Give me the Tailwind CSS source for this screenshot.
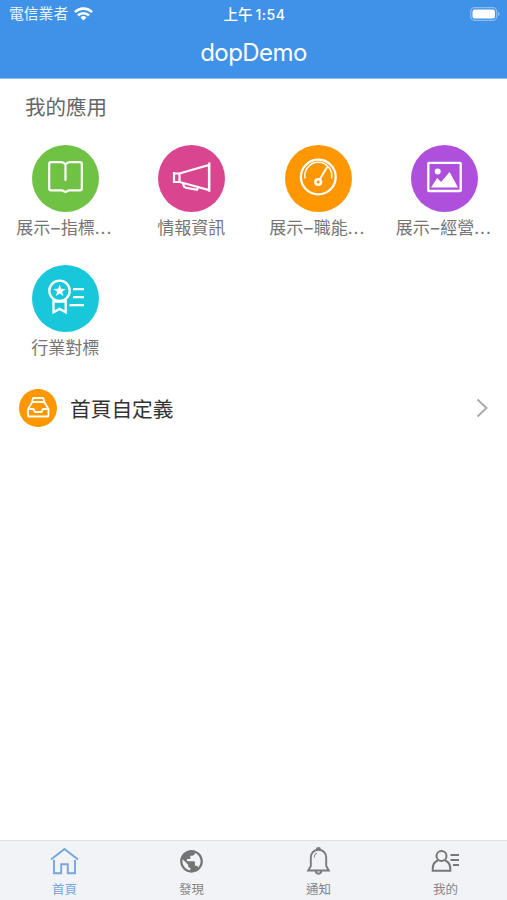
<!DOCTYPE html>
<html lang="zh-Hant">
<head>
<meta charset="utf-8">
<meta name="viewport" content="width=device-width, initial-scale=1">
<title>dopDemo</title>
<script src="https://cdn.jsdelivr.net/npm/@tailwindcss/browser@4"></script>
</head>
<body class="bg-white font-['Inter','Noto_Sans_CJK_TC',sans-serif]">
<div class="flex h-[900px] w-[507px] flex-col overflow-hidden">
  <header class="h-[79px] shrink-0 border-b border-[#8fc4f6] bg-[#3f92e8] text-white">
    <div class="grid h-[27px] grid-cols-[1fr_auto_1fr] items-center pr-[7px] pl-[9px] text-[14px] leading-[27px]">
      <div class="flex items-center gap-[6px] text-white/90">
        <span class="pt-px text-[14.8px] whitespace-nowrap">電信業者</span>
        <svg class="h-[15px] w-[19px] text-white" viewBox="0 0 19 15" fill="none" stroke="currentColor" stroke-width="2.600"><path d="M1 5.200a12 12 0 0 1 17 0M4 8.500a7.800 7.800 0 0 1 11 0"/><path d="M9.500 13.500l-3-3a4.300 4.300 0 0 1 6 0z" fill="currentColor" stroke="none"/></svg>
      </div>
      <div class="flex items-center gap-[3px] font-medium"><span class="text-[14.5px]">上午</span><span class="text-[14px] font-medium tracking-[0.5px]">1:54</span></div>
      <svg class="mb-px h-[14px] w-[30px] justify-self-end" viewBox="0 0 30 14"><rect x=".7" y=".7" width="26" height="12.600" rx="4" fill="none" stroke="#8abdf2" stroke-width="1.300"/><rect x="2.500" y="2.500" width="22.500" height="9" rx="2.200" fill="#fff"/><path d="M28.200 5v4q1.400-.7 1.400-2t-1.400-2z" fill="#9cc8f5"/></svg>
    </div>
    <h1 class="text-center text-[24px] leading-[51px] font-normal tracking-[-0.55px]">dopDemo</h1>
  </header>

  <main class="flex-1">
    <h2 class="pt-[13px] pl-[25px] text-[20.5px] leading-[32px] text-[#666]">我的應用</h2>
    <div class="mt-[21px] ml-[2px] grid w-[506px] grid-cols-4 gap-y-[27px]">
      <div class="flex h-[93px] flex-col items-center">
        <svg class="h-[67px] w-[67px] shrink-0" viewBox="0 0 67 67" fill="none" stroke="#fff" stroke-width="2.200" stroke-linejoin="round" stroke-linecap="round"><circle cx="33.500" cy="33.500" r="33.500" fill="#6fc244" stroke="none"/><path d="M33.500 35V19.500q-1.500-2.300-4.500-2.300H19q-1.800 0-1.800 1.800v24.500q0 1.800 1.800 1.800h10.500q1.500 0 2 .9 2 1.400 4 0 .5-.9 2-.9H48q1.800 0 1.800-1.800V19q0-1.800-1.800-1.800H38q-3 0-4.500 2.300"/></svg>
        <span class="mr-[2px] text-[17px] leading-[33px] whitespace-nowrap text-[#757575]">展示<span class="inline-block w-[10.500px] text-center">–</span>指標<span class="tracking-[0.9px]">...</span></span>
      </div>
      <div class="flex h-[93px] flex-col items-center">
        <svg class="h-[67px] w-[67px] shrink-0" viewBox="0 0 67 67" fill="none" stroke="#fff" stroke-width="2.200"><circle cx="33.500" cy="33.500" r="33.500" fill="#d9468f" stroke="none"/><path d="M16 27v11M16 28.500h5.500v8.500h-5.500M21.500 28.500l29.500-8.500v25l-29.500-8zM51.300 17.500v29.200M25 38.500l1 3 2 1.300 11 2 1.500-3.500"/></svg>
        <span class="mr-[1px] text-[17px] leading-[33px] text-[#757575]">情報資訊</span>
      </div>
      <div class="flex h-[93px] flex-col items-center">
        <svg class="h-[67px] w-[67px] shrink-0" viewBox="0 0 67 67" fill="none" stroke="#fff" stroke-width="2.300"><circle cx="33.500" cy="33.500" r="33.500" fill="#ff9800" stroke="none"/><circle cx="33.300" cy="32" r="17.400"/><path d="M20.100 33.500a13.500 13.500 0 1 1 26.400 0" stroke-width="1.500"/><circle cx="33.200" cy="37" r="2.800" stroke-width="2.600"/><path d="M34.700 34.600L42.300 21.800" stroke-width="1.900"/></svg>
        <span class="mr-[2px] text-[17px] leading-[33px] whitespace-nowrap text-[#757575]">展示<span class="inline-block w-[10.500px] text-center">–</span>職能<span class="tracking-[0.9px]">...</span></span>
      </div>
      <div class="flex h-[93px] flex-col items-center">
        <svg class="h-[67px] w-[67px] shrink-0" viewBox="0 0 67 67" fill="#fff"><circle cx="33.500" cy="33.500" r="33.500" fill="#ae50dc"/><rect x="17.300" y="17.800" width="32.400" height="28.200" rx=".6" fill="none" stroke="#fff" stroke-width="2.300"/><circle cx="26.700" cy="26.600" r="3"/><path d="M20 42.600L26.200 33l3.900 4 8.500-10 8.400 15.600z"/></svg>
        <span class="mr-[2px] text-[17px] leading-[33px] whitespace-nowrap text-[#757575]">展示<span class="inline-block w-[10.500px] text-center">–</span>經營<span class="tracking-[0.9px]">...</span></span>
      </div>
      <div class="flex h-[93px] flex-col items-center">
        <svg class="h-[67px] w-[67px] shrink-0" viewBox="0 0 67 67" fill="none" stroke="#fff" stroke-width="2.300"><circle cx="33.500" cy="33.500" r="33.500" fill="#18c7da" stroke="none"/><circle cx="27.500" cy="25.800" r="10.200"/><path d="M27.600 19.500l1.500 4.300 4.600.1-3.600 2.800 1.300 4.400-3.800-2.600-3.800 2.600 1.300-4.400-3.600-2.800 4.600-.1z" fill="#fff" stroke="none"/><path d="M21.500 34.500v12.700l6.100-3.300 6.100 3.300V34.500M21.500 36.500h12.200M41 24.200h11M41 32.200h11M37.500 40.200H52"/></svg>
        <span class="text-[17px] leading-[33px] text-[#757575]">行業對標</span>
      </div>
    </div>
    <div class="mt-[31px] flex h-[38px] items-center pr-[19px] pl-[19px]">
      <svg class="h-[38px] w-[38px] shrink-0" viewBox="0 0 38 38" fill="none" stroke="#fff" stroke-width="1.800" stroke-linejoin="round"><circle cx="19" cy="19" r="19" fill="#ff9800" stroke="none"/><path d="M9 20l4.300-7h11.900l4.300 7v6.500q0 1-1 1H10q-1 0-1-1zM9 20h5.500l1.500 3h6.500l1.500-3h5.500M13 12.500l1.200-3.500h10l1.200 3.500"/></svg>
      <span class="ml-[13px] flex-1 pt-[4px] text-[20.700px] leading-[38px] text-[#333]">首頁自定義</span>
      <svg class="h-[20px] w-[12px]" viewBox="0 0 12 20" fill="none" stroke="#aaa" stroke-width="1.900"><path d="M1.500 1.500L10.500 10 1.500 18.500"/></svg>
    </div>
  </main>

  <nav class="h-[60px] shrink-0 border-t border-[#dfe1e3] bg-[#f2f3f6] text-[12.5px] text-[#858585]">
   <div class="ml-px grid w-[508px] grid-cols-4">
    <div class="flex flex-col items-center pt-[6px] text-[#74a7dc]">
      <svg class="h-[29px] w-[29px] shrink-0" viewBox="0 0 29 29" fill="none" stroke="currentColor" stroke-width="1.900"><path d="M1 12.500L14.500 2 28 12.500M4 13v13.300h7.200v-9.100h6.600v9.100H25V13"/></svg>
      <span class="leading-[28px]">首頁</span>
    </div>
    <div class="flex flex-col items-center pt-[6px]">
      <svg class="h-[29px] w-[29px] shrink-0 text-[#747474]" viewBox="-2.500 -2.300 29 29" fill="currentColor"><path transform="translate(-1.600 -1.600) scale(1.135)" d="M12 2C6.480 2 2 6.480 2 12s4.480 10 10 10 10-4.480 10-10S17.520 2 12 2zm-1 17.930c-3.950-.49-7-3.850-7-7.930 0-.62.080-1.210.210-1.790L9 15v1c0 1.100.9 2 2 2v1.930zm6.900-2.540c-.26-.81-1-1.390-1.900-1.390h-1v-3c0-.55-.45-1-1-1H8v-2h2c.55 0 1-.45 1-1V7h2c1.100 0 2-.9 2-2v-.41c2.930 1.190 5 4.060 5 7.410 0 2.080-.8 3.970-2.100 5.390z"/></svg>
      <span class="leading-[28px]">發現</span>
    </div>
    <div class="flex flex-col items-center pt-[6px]">
      <svg class="h-[29px] w-[29px] shrink-0" viewBox="0 0 29 29" fill="none" stroke="#7b7b7b" stroke-width="1.900"><path d="M14.500 2.800c-4.500 0-7.700 3.300-7.700 7.700v8.500L4.200 23.500h20.600L22.200 19v-8.500c0-4.400-3.200-7.700-7.700-7.700z"/><path d="M13 2.300q0-1.300 1.500-1.300T16 2.300M11.800 23.800a2.700 2.900 0 0 0 5.400 0"/><path d="M13 6q-2.800.7-2.800 4.500" stroke-width="1"/></svg>
      <span class="leading-[28px]">通知</span>
    </div>
    <div class="flex flex-col items-center pt-[6px]">
      <svg class="h-[29px] w-[29px] shrink-0" viewBox="0 0 29 29" fill="none" stroke="#777" stroke-width="2"><circle cx="10.500" cy="9" r="5"/><path d="M7 13.500c-4 1.300-5.300 4.500-5.300 8.500v1.800h17.600V22c0-4-1.300-7.200-5.300-8.500M19.500 8H28M19.500 13H28M22 18h6"/></svg>
      <span class="leading-[28px]">我的</span>
    </div>
   </div>
  </nav>
</div>
</body>
</html>
